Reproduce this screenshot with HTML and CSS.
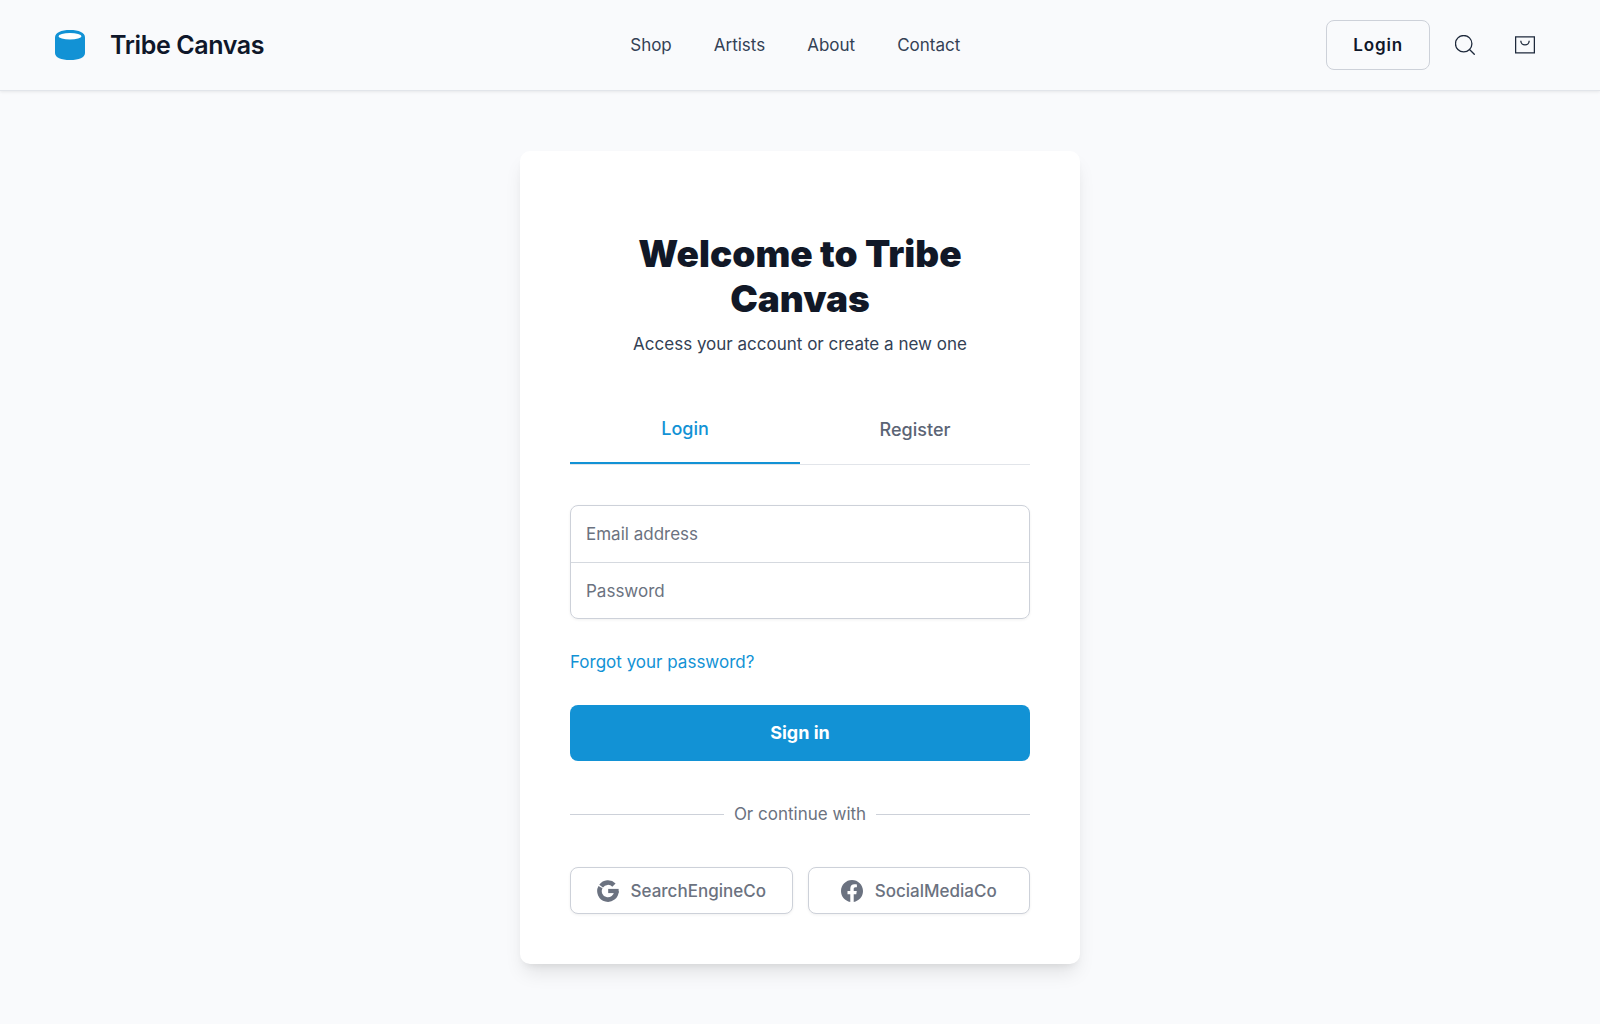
FILE: index.html
```html
<!DOCTYPE html>
<html lang="en">
<head>
<meta charset="utf-8">
<meta name="viewport" content="width=device-width, initial-scale=1">
<title>Tribe Canvas</title>
<link rel="stylesheet" href="styles.css">
</head>
<body>
<header class="header">
  <a class="brand" href="#">
    <svg class="brand-logo" viewBox="0 0 30 30" aria-hidden="true">
      <path fill="#1292d5" d="M0 7.500C0 2.500 6 0 15 0s15 2.500 15 7.500v15.500C30 27.500 24 30 15 30S0 27.500 0 23z"/>
      <ellipse cx="15" cy="6.300" rx="11.500" ry="3.200" fill="#fff"/>
    </svg>
    <span class="brand-name">Tribe Canvas</span>
  </a>
  <nav class="nav" aria-label="Main">
    <a href="#">Shop</a>
    <a href="#">Artists</a>
    <a href="#">About</a>
    <a href="#">Contact</a>
  </nav>
  <div class="actions">
    <button class="login-button" type="button">Login</button>
    <button class="icon-button" type="button" aria-label="Search">
      <svg viewBox="0 0 20 20" aria-hidden="true"><circle cx="8.700" cy="8.700" r="8.200"/><path d="M14.500 14.500l5.200 5.200"/></svg>
    </button>
    <button class="icon-button" type="button" aria-label="Cart">
      <svg viewBox="0 0 20 20" aria-hidden="true"><path d="M.6 1.900h18.800v16H.6zM5.800 5.700a4.200 4.200 0 0 0 8.400 0"/></svg>
    </button>
  </div>
</header>
<main class="main">
  <section class="card">
    <h1 class="title">Welcome to Tribe Canvas</h1>
    <p class="subtitle">Access your account or create a new one</p>
    <div class="tabs" role="tablist">
      <button class="tab tab-active" type="button" role="tab" aria-selected="true">Login</button>
      <button class="tab" type="button" role="tab" aria-selected="false">Register</button>
    </div>
    <form class="form">
      <div class="fields">
        <input class="field" type="email" placeholder="Email address" aria-label="Email address">
        <input class="field" type="password" placeholder="Password" aria-label="Password">
      </div>
      <a class="forgot" href="#">Forgot your password?</a>
      <button class="submit" type="submit">Sign in</button>
    </form>
    <div class="divider"><span>Or continue with</span></div>
    <div class="social">
      <button class="social-button" type="button">
        <svg viewBox="0 0 24 24" aria-hidden="true"><g fill="none" stroke="currentColor" stroke-width="5"><path d="M18.500 5.500A9.200 9.200 0 0 0 4.500 6.700"/><path d="M3.800 7.800A9.200 9.200 0 1 0 21.100 12.100"/><path stroke-width="4.600" d="M12.200 12H23.600"/></g></svg>
        SearchEngineCo
      </button>
      <button class="social-button" type="button">
        <svg viewBox="0 0 24 24" aria-hidden="true"><path fill="currentColor" d="M24 12.073c0-6.627-5.373-12-12-12s-12 5.373-12 12c0 5.990 4.388 10.954 10.125 11.854v-8.385H7.078v-3.470h3.047V9.430c0-3.007 1.792-4.669 4.533-4.669 1.312 0 2.686.235 2.686.235v2.953H15.830c-1.491 0-1.956.925-1.956 1.874v2.250h3.328l-.532 3.470h-2.796v8.385C19.612 23.027 24 18.062 24 12.073z"/></svg>
        SocialMediaCo
      </button>
    </div>
  </section>
</main>
</body>
</html>
```
FILE: styles.css
```css
*, *::before, *::after { box-sizing: border-box; }

body {
  margin: 0;
  background: #f9fafc;
  color: #0f172a;
  font-family: Inter, "Liberation Sans", sans-serif;
  font-size: 17px;
  line-height: 26px;
}

a { color: inherit; text-decoration: none; }
button, input { font: inherit; color: inherit; }
button { cursor: pointer; }

.header {
  display: flex;
  justify-content: space-between;
  align-items: center;
  padding: 20px 50px;
  border-bottom: 1px solid #e2e5ea;
  box-shadow: 0 1px 3px rgba(0, 0, 0, 0.08);
}

.brand { display: flex; align-items: center; gap: 25px; padding-left: 5px; }
.brand-logo { width: 30px; height: 30px; }
.brand-name { font-size: 25px; font-weight: 600; line-height: 30px; letter-spacing: -0.015em; }

.nav { display: flex; gap: 42px; color: #334155; }

.actions { display: flex; align-items: center; gap: 10px; }
.login-button {
  height: 50px;
  padding: 0 26px;
  border: 1px solid #cdd1d9;
  border-radius: 8px;
  background: none;
  font-weight: 600;
  letter-spacing: 0.05em;
}
.icon-button { display: flex; padding: 15px; border: 0; background: none; color: #1e293b; }
.icon-button svg {
  width: 20px;
  height: 20px;
  fill: none;
  stroke: currentColor;
  stroke-width: 1.3;
}

.main { display: flex; justify-content: center; padding: 60px 20px; }

.card {
  width: 100%;
  max-width: 560px;
  padding: 80px 50px 50px;
  border-radius: 10px;
  background: #fff;
  box-shadow: 0 12px 19px -4px rgba(0, 0, 0, 0.1), 0 5px 8px -5px rgba(0, 0, 0, 0.1);
}

.title {
  margin: 0;
  color: #111827;
  font-size: 37px;
  font-weight: 900;
  line-height: 45px;
  text-align: center;
}
.subtitle { margin: 10px 0 0; color: #334155; text-align: center; }

.tabs { display: flex; margin-top: 40px; border-bottom: 1px solid #e2e5ea; }
.tab {
  flex: 1;
  padding: 20px 5px 21px;
  border: 0;
  background: none;
  color: #5b6475;
  font-size: 18px;
  font-weight: 500;
}
.tab-active { padding: 19px 5px 20px; border-bottom: 2px solid #1292d5; color: #1292d5; }

.form { display: flex; flex-direction: column; margin-top: 40px; }
.fields {
  display: flex;
  flex-direction: column;
  border: 1px solid #cdd1d9;
  border-radius: 8px;
  box-shadow: 0 1px 3px rgba(0, 0, 0, 0.06);
  overflow: hidden;
}
.field { width: 100%; height: 56px; padding: 0 15px; border: 0; background: none; }
.field + .field { border-top: 1px solid #d5d9df; }
.field::placeholder { color: #6b7280; opacity: 1; }

.forgot { align-self: flex-start; margin-top: 30px; color: #1292d5; }
.submit {
  height: 56px;
  margin-top: 30px;
  border: 0;
  border-radius: 8px;
  background: #1292d5;
  color: #fff;
  font-size: 18px;
  font-weight: 700;
}

.divider { display: flex; align-items: center; gap: 10px; margin-top: 40px; color: #6b7280; }
.divider::before, .divider::after { content: ""; flex: 1; border-top: 1px solid #cdd1d9; }

.social { display: grid; grid-template-columns: 1fr 1fr; gap: 15px; margin-top: 40px; }
.social-button {
  display: flex;
  align-items: center;
  justify-content: center;
  gap: 12px;
  height: 47px;
  padding: 0 10px;
  border: 1px solid #cdd1d9;
  border-radius: 8px;
  background: #fff;
  box-shadow: 0 1px 3px rgba(0, 0, 0, 0.06);
  color: #6b7280;
  font-weight: 500;
}
.social-button svg { width: 22px; height: 22px; }
```
